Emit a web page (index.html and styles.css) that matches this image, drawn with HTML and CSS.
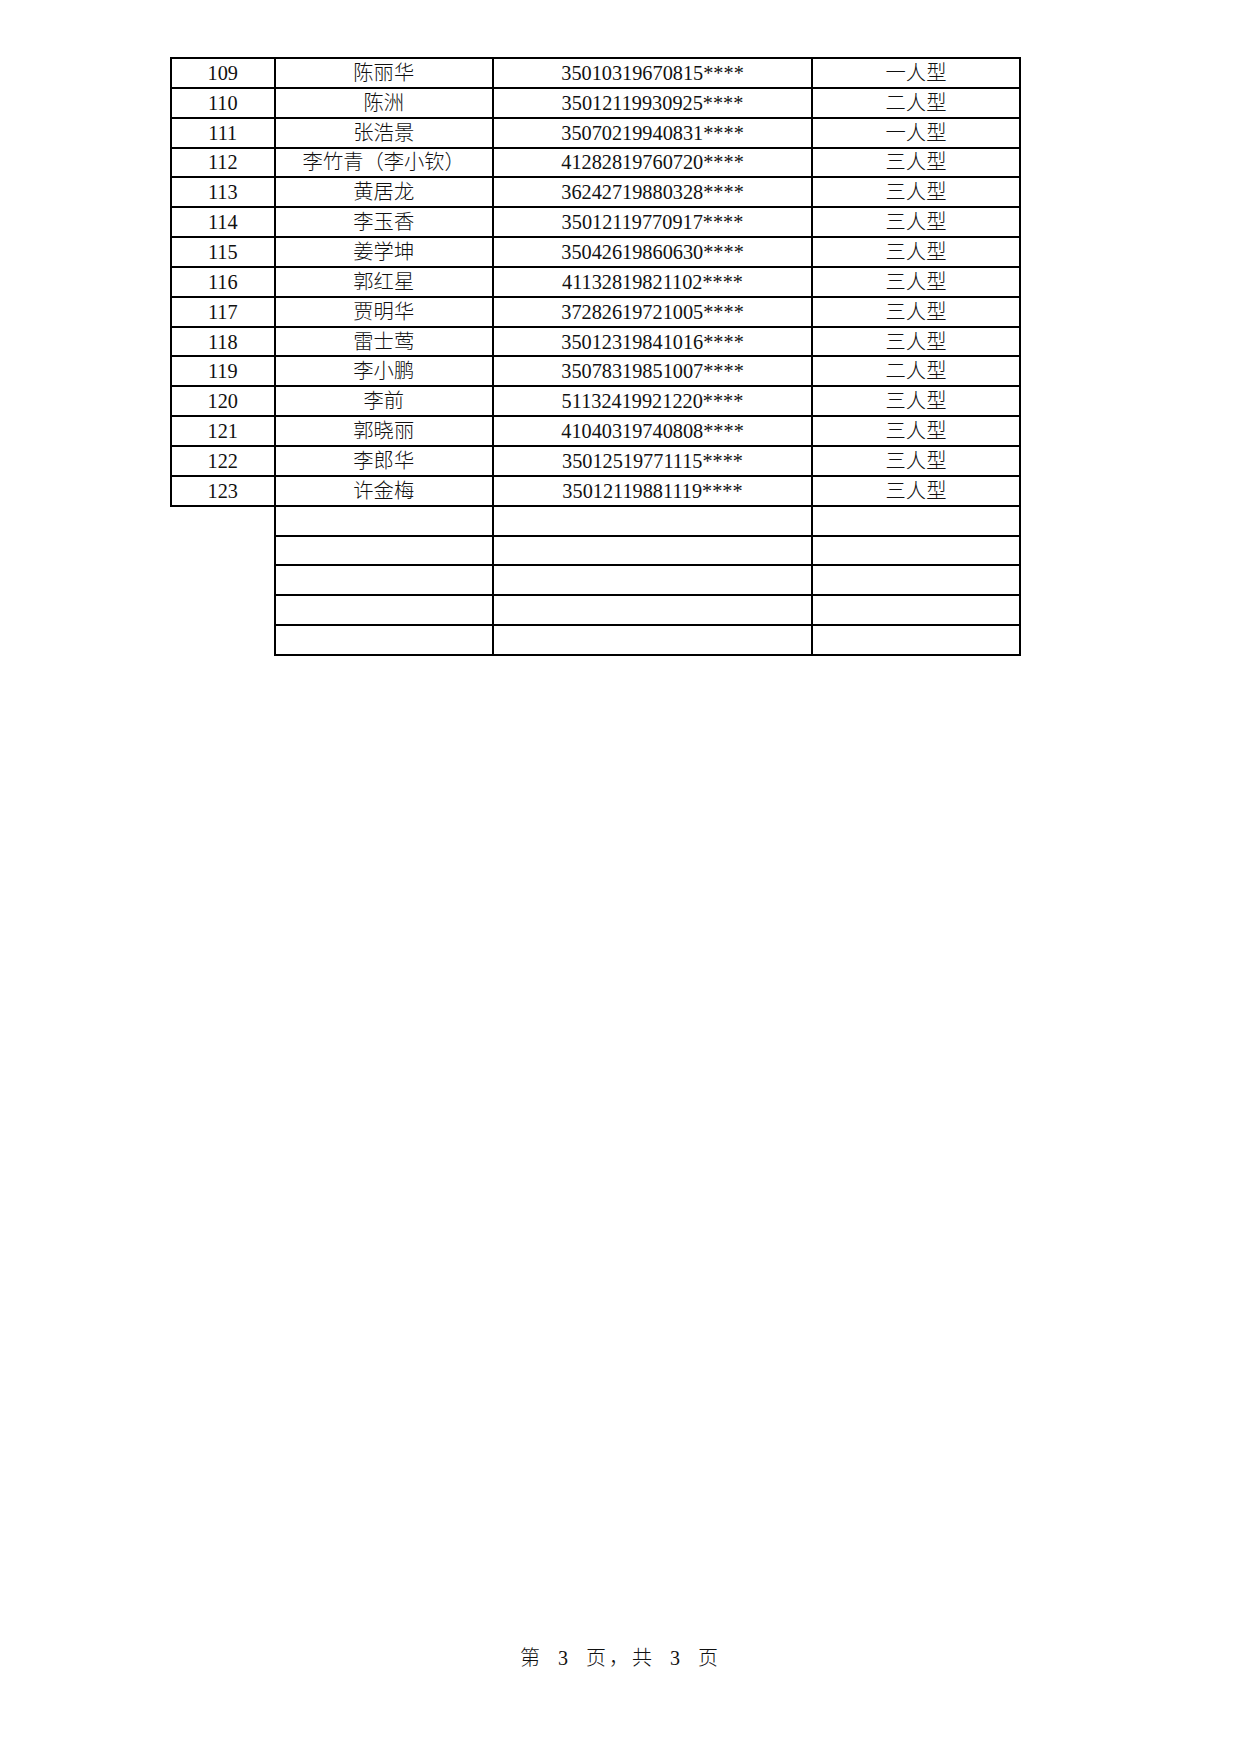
FILE: index.html
```html
<!DOCTYPE html>
<html lang="zh-CN">
<head>
<meta charset="utf-8">
<title>第 3 页</title>
<link rel="stylesheet" href="styles.css">
</head>
<body>
<div class="page">
  <table class="sheet">
    <colgroup>
      <col class="c-no">
      <col class="c-name">
      <col class="c-id">
      <col class="c-type">
    </colgroup>
    <tbody>
      <tr><td>109</td><td>陈丽华</td><td>35010319670815****</td><td>一人型</td></tr>
      <tr><td>110</td><td>陈洲</td><td>35012119930925****</td><td>二人型</td></tr>
      <tr><td>111</td><td>张浩景</td><td>35070219940831****</td><td>一人型</td></tr>
      <tr><td>112</td><td>李竹青（李小钦）</td><td>41282819760720****</td><td>三人型</td></tr>
      <tr><td>113</td><td>黄居龙</td><td>36242719880328****</td><td>三人型</td></tr>
      <tr><td>114</td><td>李玉香</td><td>35012119770917****</td><td>三人型</td></tr>
      <tr><td>115</td><td>姜学坤</td><td>35042619860630****</td><td>三人型</td></tr>
      <tr><td>116</td><td>郭红星</td><td>41132819821102****</td><td>三人型</td></tr>
      <tr><td>117</td><td>贾明华</td><td>37282619721005****</td><td>三人型</td></tr>
      <tr><td>118</td><td>雷士莺</td><td>35012319841016****</td><td>三人型</td></tr>
      <tr><td>119</td><td>李小鹏</td><td>35078319851007****</td><td>二人型</td></tr>
      <tr><td>120</td><td>李前</td><td>51132419921220****</td><td>三人型</td></tr>
      <tr><td>121</td><td>郭晓丽</td><td>41040319740808****</td><td>三人型</td></tr>
      <tr><td>122</td><td>李郎华</td><td>35012519771115****</td><td>三人型</td></tr>
      <tr><td>123</td><td>许金梅</td><td>35012119881119****</td><td>三人型</td></tr>
      <tr class="empty"><td class="blank"></td><td></td><td></td><td></td></tr>
      <tr class="empty"><td class="blank"></td><td></td><td></td><td></td></tr>
      <tr class="empty"><td class="blank"></td><td></td><td></td><td></td></tr>
      <tr class="empty"><td class="blank"></td><td></td><td></td><td></td></tr>
      <tr class="empty"><td class="blank"></td><td></td><td></td><td></td></tr>
    </tbody>
  </table>
  <div class="footer">第 3 页，共 3 页</div>
</div>
</body>
</html>
```
FILE: styles.css
```css
html, body {
  margin: 0;
  padding: 0;
  background: #ffffff;
}

.page {
  width: 1241px;
  height: 1754px;
  display: flex;
  flex-direction: column;
  align-items: flex-start;
  font-family: "Liberation Serif", "Noto Sans CJK SC", serif;
  font-weight: 300;
  color: #111111;
}

.sheet {
  margin-top: 57px;
  margin-left: 170px;
  border-collapse: collapse;
  table-layout: fixed;
  width: 851px;
}

.c-no { width: 103.5px; }
.c-name { width: 218.5px; }
.c-id { width: 319px; }
.c-type { width: 208px; }

.sheet td {
  border: 2px solid #000000;
  height: 27.85px;
  padding: 0;
  text-align: center;
  vertical-align: middle;
  font-size: 20.3px;
  line-height: 20px;
  white-space: nowrap;
  overflow: hidden;
}

.sheet td.blank {
  border: none;
}

.footer {
  margin-top: auto;
  margin-bottom: 84px;
  align-self: center;
  font-size: 20px;
  line-height: 24px;
  letter-spacing: 3px;
  word-spacing: 7px;
}
```
